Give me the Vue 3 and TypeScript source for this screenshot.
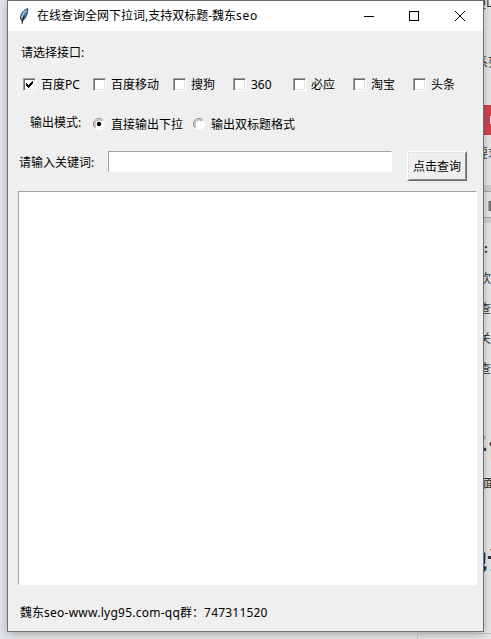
<script setup lang="ts">
import { ref } from 'vue'

interface Engine { name: string; width: number; checked: boolean }

const engines = ref<Engine[]>([
  { name: '百度PC', width: 70, checked: true },
  { name: '百度移动', width: 80, checked: false },
  { name: '搜狗', width: 60, checked: false },
  { name: '360', width: 60, checked: false },
  { name: '必应', width: 60, checked: false },
  { name: '淘宝', width: 60, checked: false },
  { name: '头条', width: 60, checked: false },
])
const modes = ['直接输出下拉', '输出双标题格式']
const mode = ref(0)
const keyword = ref('')
const output = ref('')
</script>

<template>
  <div class="desktop">
    <div class="backdrop">
      <div class="page-left"></div>
      <div class="page-main"></div>
      <div class="page-right">
        <div class="frag top">QL</div>
        <div class="frag series">系列</div>
        <div class="banner"><i></i></div>
        <div class="frag want">要求</div>
        <div class="tabs"><i></i></div>
        <div class="frag colon">:</div>
        <div class="frag line">欢</div>
        <div class="frag line">查</div>
        <div class="frag line">关</div>
        <div class="frag line">查</div>
        <div class="frag head first">平台</div>
        <div class="frag small">面</div>
        <div class="frag head second">地认</div>
      </div>
      <div class="panel-edge"></div>
    </div>

    <main class="window">
      <header class="titlebar">
        <svg class="feather" viewBox="0 0 10 16">
          <path d="M8.700 .6C5.500 1.200 1.500 5.200 1.400 10.300L3 13.100C6.200 11.700 9.300 5.600 8.700 .6Z" fill="#4a82c4" stroke="#111" stroke-width=".7" />
          <path d="M7.500 2C5 4 3.100 7.200 3.200 10" fill="none" stroke="#9cc6ef" stroke-width="1.500" />
          <path d="M5.500 7.500C4 10 3.200 12.200 3 15.800" fill="none" stroke="#101010" stroke-width="1.100" />
        </svg>
        <h1>在线查询全网下拉词,支持双标题-魏东<span class="title-seo">seo</span></h1>
        <svg class="controls" viewBox="0 0 104 12" fill="none" stroke="#000">
          <path d="M0 6.500H10M45.500 1.500H54.500V10.500H45.500Z" shape-rendering="crispEdges" />
          <path d="M91 1L101 11M101 1L91 11" />
        </svg>
      </header>

      <div class="client">
        <div class="heading">请选择接口:</div>
        <div class="engines">
          <label v-for="e in engines" :key="e.name" :style="{ width: e.width + 'px' }">
            <span class="check" @click="e.checked = !e.checked">
              <svg v-if="e.checked" viewBox="0 0 7 7" shape-rendering="crispEdges">
                <path d="M0 2h1v1h1v1h1V3h1V2h1V1h1V0h1v3H6v1H5v1H4v1H3v1H2V6H1V5H0Z" />
              </svg>
            </span>
            <span class="engine-name">{{ e.name }}</span>
          </label>
        </div>
        <div class="modes">
          <span class="mode-title">输出模式:</span>
          <label v-for="(m, i) in modes" :key="m" @click="mode = i">
            <svg viewBox="0 0 12 12">
              <circle cx="6" cy="6" r="5.800" fill="#fff" />
              <path d="M2.100 9.900A5.500 5.500 0 0 1 9.900 2.100" fill="none" stroke="#858585" stroke-width="1" />
              <path d="M2.900 9.100A4.400 4.400 0 0 1 9.100 2.900" fill="none" stroke="#777" stroke-width=".7" />
              <circle v-if="mode === i" cx="6" cy="6" r="2.200" />
            </svg>
            <span>{{ m }}</span>
          </label>
        </div>
        <div class="search">
          <span class="search-label">请输入关键词:</span>
          <input v-model="keyword" type="text" />
          <button type="button">点击查询</button>
        </div>
        <textarea v-model="output"></textarea>
        <footer>魏东<span class="site">seo-www.lyg95.com-qq</span>群：<span class="number">747311520</span></footer>
      </div>
    </main>
  </div>
</template>

<style>
body { margin: 0; overflow: hidden; }
</style>

<style scoped>
.desktop {
  display: grid;
  width: 491px;
  height: 639px;
  overflow: hidden;
  font: 12px/16px "Noto Sans", "Noto Sans CJK SC", sans-serif;
  color: #000;
}
.desktop * { box-sizing: border-box; }
.backdrop, .window { grid-area: 1 / 1; }
.backdrop {
  display: grid;
  grid-template-columns: 13px 470px 8px;
  grid-template-rows: 633px 6px;
  background: #e5e5e5;
  min-width: 0;
}
.page-left { grid-row: 1 / 3; background: #e2e6eb; }
.page-main { grid-row: 1 / 3; }
.page-right { grid-column: 3; grid-row: 1; overflow: hidden; background: #e8e8e8; }
.panel-edge {
  grid-column: 2 / 4;
  grid-row: 2;
  margin-left: 404px;
  border-left: 1px solid #bbb;
  border-top: 1px solid #b5b5b5;
  z-index: 2;
}
.frag {
  width: 32px;
  height: 16px;
  margin-left: -5px;
  font-family: "Noto Sans CJK SC", sans-serif;
  white-space: nowrap;
  color: #333;
}
.top { margin-left: -6px; margin-top: -6px; }
.series { margin-top: 44px; margin-left: -7px; }
.banner { height: 30px; margin-top: 35px; background: #d0424d; padding: 11px 0 0 7px; }
.banner i { display: block; width: 1px; height: 8px; background: #eed0e8; }
.want { margin-top: 10px; margin-left: -7px; }
.tabs {
  height: 38px;
  margin-top: 24px;
  border-top: 6px solid #d2d2d4;
  border-bottom: 5px solid #d2d2d2;
  box-shadow: inset 0 1px #aaa, inset 0 -1px #aaa;
  padding: 10px 0 0 5px;
}
.tabs i { display: block; width: 4px; height: 10px; border-left: 1px solid #c9a57a; background: #777386; }
.colon { margin: 17px 0 0 1px; font-weight: 700; }
.line { margin-top: 14px; margin-left: -4px; }
.head { height: 32px; font-size: 26px; line-height: 32px; font-weight: 700; color: #292c38; }
.first { margin-top: 54px; margin-left: -22px; }
.small { margin-top: 13px; margin-left: 0; }
.second { margin-top: 52px; margin-left: -22px; }
.window {
  z-index: 1;
  width: 477px;
  height: 632px;
  margin-left: 7px;
  border: 1px solid #707070;
  background: #efefef;
  box-shadow: 0 2px 9px rgba(0, 0, 0, .28);
}
.titlebar {
  height: 30px;
  display: flex;
  align-items: center;
  padding-left: 11px;
  background: #fff;
}
.feather { width: 10px; height: 16px; flex: none; }
h1 { width: 327px; margin: 0 0 0 8px; font: inherit; white-space: nowrap; }
.title-seo { letter-spacing: .7px; }
.controls { width: 104px; height: 12px; flex: none; margin-top: -1px; }
.client { white-space: nowrap; }
.heading { height: 42px; padding: 14px 0 0 13px; }
.engines { display: flex; height: 25px; padding-left: 15px; }
.engines label { display: flex; align-items: center; height: 22px; flex: none; gap: 5px; }
.engine-name { padding-top: 2px; }
.check {
  width: 13px;
  height: 13px;
  flex: none;
  padding: 2px;
  border: 1px solid;
  border-color: #9f9f9f #fff #fff #9f9f9f;
  background: #fff;
  box-shadow: inset 1px 1px #696969, inset -1px -1px #e3e3e3;
}
.check svg { display: block; width: 7px; height: 7px; }
.modes { display: flex; height: 53px; padding: 16px 0 0 22px; }
.mode-title { width: 63px; margin-top: 1px; }
.modes label { width: 100px; display: flex; align-items: center; height: 21px; gap: 6px; }
.modes svg { width: 12px; height: 12px; flex: none; margin-top: -2px; }
.search { display: flex; height: 40px; padding-left: 11px; }
.search-label { width: 89px; padding-top: 4px; }
input, textarea, button { margin: 0; border-radius: 0; font: inherit; outline: none; }
input {
  width: 284px;
  height: 21px;
  padding: 0 3px;
  border: 1px solid;
  border-color: #a0a0a0 #fff #fff #a0a0a0;
  background: #fff;
}
button {
  width: 60px;
  height: 30px;
  margin-left: 15px;
  padding: 1px 0 0;
  border: 1px solid;
  border-color: #fff #696969 #696969 #fff;
  background: #efefef;
  color: #000;
  box-shadow: inset 1px 1px #e3e3e3, inset -1px -1px #8b8b8b;
}
textarea {
  display: block;
  width: 459px;
  height: 394px;
  margin-left: 10px;
  padding: 3px;
  resize: none;
  border: 1px solid;
  border-color: #a0a0a0 #fff #fff #a0a0a0;
  background: #fff;
}
footer { margin: 20px 0 0 12px; }
.site { letter-spacing: .25px; }
.number { letter-spacing: .2px; }
</style>
